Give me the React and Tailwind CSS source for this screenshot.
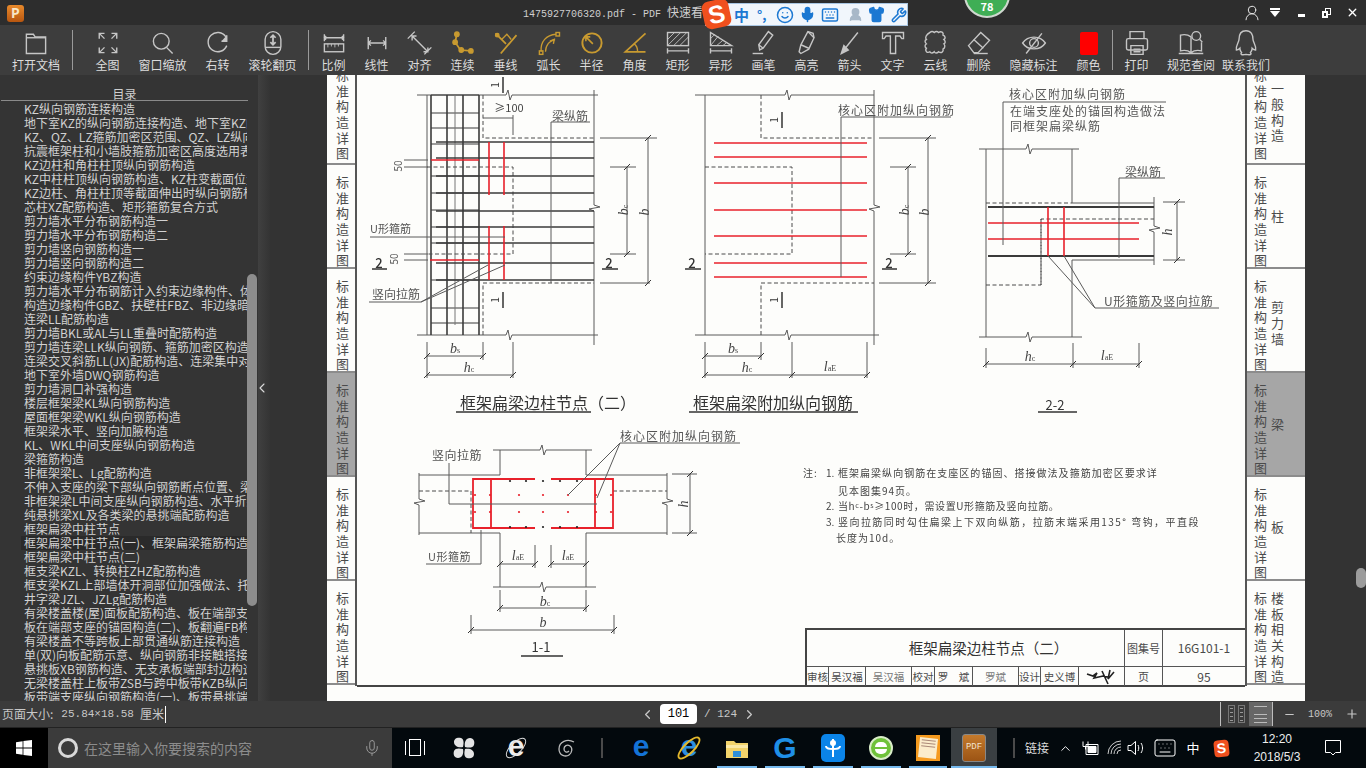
import React from "react";
import {
  ChevronLeft,
  ChevronRight,
  ChevronUp,
  Keyboard,
  Mic,
  Minus,
  Plus,
  Shirt,
  Smile,
  UserRound,
  Wrench,
  X,
} from "lucide-react";

const TOC = [
  "KZ纵向钢筋连接构造",
  "地下室KZ的纵向钢筋连接构造、地下室KZ的",
  "KZ、QZ、LZ箍筋加密区范围、QZ、LZ纵向钢",
  "抗震框架柱和小墙肢箍筋加密区高度选用表",
  "KZ边柱和角柱柱顶纵向钢筋构造",
  "KZ中柱柱顶纵向钢筋构造、KZ柱变截面位置",
  "KZ边柱、角柱柱顶等截面伸出时纵向钢筋构",
  "芯柱XZ配筋构造、矩形箍筋复合方式",
  "剪力墙水平分布钢筋构造一",
  "剪力墙水平分布钢筋构造二",
  "剪力墙竖向钢筋构造一",
  "剪力墙竖向钢筋构造二",
  "约束边缘构件YBZ构造",
  "剪力墙水平分布钢筋计入约束边缘构件、体",
  "构造边缘构件GBZ、扶壁柱FBZ、非边缘暗柱",
  "连梁LL配筋构造",
  "剪力墙BKL或AL与LL重叠时配筋构造",
  "剪力墙连梁LLK纵向钢筋、箍筋加密区构造",
  "连梁交叉斜筋LL(JX)配筋构造、连梁集中对",
  "地下室外墙DWQ钢筋构造",
  "剪力墙洞口补强构造",
  "楼层框架梁KL纵向钢筋构造",
  "屋面框架梁WKL纵向钢筋构造",
  "框架梁水平、竖向加腋构造",
  "KL、WKL中间支座纵向钢筋构造",
  "梁箍筋构造",
  "非框架梁L、Lg配筋构造",
  "不伸入支座的梁下部纵向钢筋断点位置、梁",
  "非框架梁L中间支座纵向钢筋构造、水平折梁",
  "纯悬挑梁XL及各类梁的悬挑端配筋构造",
  "框架扁梁中柱节点",
  "框架扁梁中柱节点(一)、框架扁梁箍筋构造",
  "框架扁梁中柱节点(二)",
  "框支梁KZL、转换柱ZHZ配筋构造",
  "框支梁KZL上部墙体开洞部位加强做法、托柱",
  "井字梁JZL、JZLg配筋构造",
  "有梁楼盖楼(屋)面板配筋构造、板在端部支",
  "板在端部支座的锚固构造(二)、板翻遍FB构",
  "有梁楼盖不等跨板上部贯通纵筋连接构造",
  "单(双)向板配筋示意、纵向钢筋非接触搭接",
  "悬挑板XB钢筋构造、无支承板端部封边构造",
  "无梁楼盖柱上板带ZSB与跨中板带KZB纵向钢",
  "板带端支座纵向钢筋构造(一)、板带悬挑端",
];

const G = "#c89a30";
const W = "#c6c6c6";

const Ic = ({ children, color = W }) => (
  <svg width="28" height="28" viewBox="0 0 32 32" fill="none" stroke={color} strokeWidth="1.6">
    {children}
  </svg>
);

const TOOLS = [
  { label: "打开文档", w: "w-[48px]", icon: <Ic><path d="M5 10V6h8l2 3h12v19H5z" /><path d="M5 10h22" /></Ic> },
  { sep: "ml-[12px] mr-[7px]" },
  { label: "全图", w: "w-[55px]", icon: <Ic><path d="M6 11V5h6M6 5l6 6M26 11V5h-6M26 5l-6 6M6 21v6h6M6 27l6-6M26 21v6h-6M26 27l-6-6" /></Ic> },
  { label: "窗口缩放", w: "w-[55px]", icon: <Ic><circle cx="14" cy="14" r="9" /><path d="M20 21l7 7" /></Ic> },
  { label: "右转", w: "w-[55px]", icon: <Ic><path d="M25 9a11 11 0 1 0 1 10" /><path d="M26 7v7h-6" fill={W} /></Ic> },
  { label: "滚轮翻页", w: "w-[55px]", icon: <Ic><rect x="7" y="3" width="18" height="26" rx="9" /><path d="M7 21h18" /><path d="M16 8v9M13 10l3-3 3 3M13 15l3 3 3-3" strokeWidth="2" /></Ic> },
  { sep: "ml-[8px] mr-[3px]" },
  { label: "比例", w: "w-[43px]", icon: <Ic><path d="M5 6v8M27 6v8M5 10h22M7 8l-2 2 2 2M25 8l2 2-2 2" /><rect x="5" y="17" width="22" height="9" /><path d="M9 17v4M13 17v3M17 17v4M21 17v3" strokeWidth="1" /></Ic> },
  { label: "线性", w: "w-[43px]", icon: <Ic><path d="M6 9v14M26 9v14M6 16h20M9 13l-3 3 3 3M23 13l3 3-3 3" /></Ic> },
  { label: "对齐", w: "w-[43px]", icon: <Ic><path d="M2 11L10 3M21 29l8-8M7 8l18 18M7 13V8h5M25 21v5h-5" /></Ic> },
  { label: "连续", w: "w-[43px]", icon: <Ic color={G}><path d="M9 6L7 15l6 9 12 1" strokeWidth="2" /><circle cx="9" cy="6" r="2.5" fill={G} /><circle cx="7" cy="15" r="2.5" fill={G} /><circle cx="14" cy="24" r="2.5" fill={G} /><circle cx="25" cy="25" r="2.5" fill={G} /></Ic> },
  { label: "垂线", w: "w-[43px]", icon: <Ic color={G}><path d="M4 5l12 12M28 7L10 28" strokeWidth="2" /><path d="M11 12l6-6 5 6" strokeWidth="1.5" /><circle cx="6" cy="7" r="2" fill={G} /></Ic> },
  { label: "弧长", w: "w-[43px]", icon: <Ic color={G}><path d="M7 26c-1-12 6-19 17-20M12 26c0-8 5-13 11-14" strokeWidth="1.5" /><rect x="24" y="4" width="4" height="4" /><rect x="5" y="25" width="4" height="4" /><path d="M17 14l5-2-1 5" /></Ic> },
  { label: "半径", w: "w-[43px]", icon: <Ic color={G}><circle cx="16" cy="16" r="11" strokeWidth="2.2" /><path d="M17 17L9 9M9 14V9h5" strokeWidth="1.8" /></Ic> },
  { label: "角度", w: "w-[43px]", icon: <Ic color={G}><path d="M28 5L5 26h23" strokeWidth="2" /><path d="M15 17c3 2 4 5 4 9" strokeWidth="1.5" /></Ic> },
  { label: "矩形", w: "w-[43px]", icon: <Ic><rect x="4" y="4" width="24" height="15" /><path d="M4 12l8-8M4 19L19 4M11 19L26 4M18 19l10-10" strokeWidth="1" /><path d="M4 22v6M28 22v6M4 25h24" /></Ic> },
  { label: "异形", w: "w-[43px]", icon: <Ic><path d="M4 4v15h24z" /><path d="M4 11l5-5M4 19L13 8M11 19l7-6M18 19l4-3" strokeWidth="1" /><path d="M4 22v6M28 22v6M4 25h24" /></Ic> },
  { label: "画笔", w: "w-[43px]", icon: <Ic><path d="M11 24l-1-6L21 3l5 4-11 15zM10 18l5 4" /><path d="M3 28h12" /></Ic> },
  { label: "高亮", w: "w-[43px]", icon: <Ic><path d="M9 28l-2-2 2-8 8-15 6 2 1 5-6 13z" /><path d="M9 18l9 4M17 3l7 7" /></Ic> },
  { label: "箭头", w: "w-[43px]", icon: <Ic><path d="M25 4L9 24" /><path d="M6 28l8-4-5-5z" fill={W} /></Ic> },
  { label: "文字", w: "w-[43px]", icon: <Ic><path d="M4 4h24v7h-2l-2-3h-5v20h-6V8H8l-2 3H4z" /></Ic> },
  { label: "云线", w: "w-[43px]", icon: <Ic><path d="M9 4c2-2 4-1 5 0 2-2 4-1 5 0 3-2 6 0 5 3 3 1 3 4 1 5 2 2 2 4 0 5 2 2 1 5-1 6 1 3-2 5-5 3-2 2-4 2-5 0-2 2-4 2-5 0-3 2-6-1-4-4-2-1-2-4 0-5-2-2-2-4 0-5-2-2 0-6 4-8z" /></Ic> },
  { label: "删除", w: "w-[43px]", icon: <Ic><path d="M4 19L18 4l10 9-13 14H10z" /><path d="M10 12l11 10" /><path d="M10 28h16" /></Ic> },
  { label: "隐藏标注", w: "w-[67px]", icon: <Ic><path d="M3 16c6-9 20-9 26 0-6 9-20 9-26 0z" /><circle cx="16" cy="16" r="5" /><path d="M25 5L7 28" /></Ic> },
  { label: "颜色", w: "w-[43px]", icon: <div className="w-[18px] h-[23px] rounded-[2px] bg-[#ff0000]" /> },
  { sep: "ml-[2px]" },
  { label: "打印", w: "w-[47px]", icon: <Ic><path d="M8 11V3h16v8" /><rect x="4" y="11" width="24" height="13" rx="2" /><path d="M9 19h14v10H9zM12 23h8M12 26h8" /></Ic> },
  { label: "规范查阅", w: "w-[62px]", icon: <Ic><path d="M16 9C12 6 8 6 4 7v18c4-1 8-1 12 2 4-3 8-3 12-2V15M16 9v18M2 28h28" /><circle cx="22" cy="8" r="5" /><path d="M26 12l3 3" /></Ic> },
  { label: "联系我们", w: "w-[48px]", icon: <Ic><path d="M16 2c-6 0-8 5-8 10 0 3-4 7-3 12 2 0 3-1 4-2 0 2 1 4 2 5-2 2 0 3 5 2 5 1 7 0 5-2 1-1 2-3 2-5 1 1 2 2 4 2 1-5-3-9-3-12 0-5-2-10-8-10z" /></Ic> },
];

const Sep = ({ cls }) => <div className={`w-px h-[40px] bg-[#9a9a9a] ${cls}`} />;

const Toolbar = () => (
  <div className="h-[50px] bg-[#3d3d3d] flex items-center pl-3">
    {TOOLS.map((t, i) =>
      t.sep ? (
        <Sep key={i} cls={t.sep} />
      ) : (
        <div key={i} className={`${t.w} flex flex-col items-center text-[12px] leading-[14px] text-[#dcdcdc] whitespace-nowrap`}>
          <div className="h-[29px] flex items-center justify-center">{t.icon}</div>
          <div>{t.label}</div>
        </div>
      )
    )}
  </div>
);

const TitleBar = () => (
  <div className="h-[25px] bg-[#2d2d2d] relative flex items-center">
    <div className="absolute left-[7px] top-[5px] w-[17px] h-[17px] rounded-[3px] bg-gradient-to-b from-[#e88a2c] to-[#b8560f] flex items-center justify-center text-[14px] leading-none text-[#f7e6c8] font-['Liberation_Mono',monospace] font-bold">
      P
    </div>
    <div className="ml-[523px] text-[#cfcfcf] text-[12px] whitespace-nowrap">
      <span className="font-['Liberation_Mono',monospace] text-[10px]">1475927706320.pdf - PDF </span>
      快速看图
    </div>

    <div className="absolute left-[705px] top-[3px] w-[203px] h-[23px] bg-[#f1f6fc] border border-[#a9c6e2] flex items-center text-[#1c78d2]">
      <div className="absolute -left-[3px] -top-[4px] w-[27px] h-[28px] rounded-[7px] -rotate-12 bg-[#f0501e] flex items-center justify-center text-white font-['Liberation_Sans',sans-serif] font-bold text-[25px] leading-none">
        S
      </div>
      <span className="ml-[28px] text-[15px] font-bold leading-none">中</span>
      <span className="ml-[8px] w-[14px] text-[13px] font-bold leading-none">°,</span>
      <Smile size={18} strokeWidth={2} className="ml-[5px]" />
      <Mic size={17} strokeWidth={2.2} className="ml-[5px]" fill="#1c78d2" />
      <Keyboard size={18} strokeWidth={2} className="ml-[5px]" />
      <UserRound size={15} strokeWidth={2.5} className="ml-[9px] text-[#a8b8c8]" fill="#a8b8c8" />
      <Shirt size={17} strokeWidth={2} className="ml-[5px]" fill="#1c78d2" />
      <Wrench size={16} strokeWidth={2.4} className="ml-[6px]" />
    </div>

    <div className="absolute left-[964px] -top-[28px] w-[46px] h-[46px] rounded-full bg-[#3fae55] border-2 border-[#cfd8cf] flex items-end justify-center pb-[3px] text-white text-[11px] font-bold leading-[13px]">
      78
    </div>

    <div className="absolute right-0 top-0 h-[25px] flex items-center text-[#e8e8e8]">
      <UserRound size={18} strokeWidth={1.3} />
      <div className="ml-[9px] flex flex-col items-center">
        <div className="w-[10px] h-[2px] bg-white mb-[1px]" />
        <div className="w-0 h-0 border-x-[5px] border-x-transparent border-t-[6px] border-t-white" />
      </div>
      <div className="ml-[18px] w-[7px] h-[3px] bg-white mt-[6px]" />
      <div className="ml-[17px] relative w-[9px] h-[10px]">
        <div className="absolute right-0 top-0 w-[6px] h-[7px] border border-white" />
        <div className="absolute left-0 bottom-0 w-[6px] h-[7px] border-2 border-white bg-[#2d2d2d]" />
      </div>
      <X size={13} strokeWidth={2.5} className="ml-[15px] mr-[7px] text-white" />
    </div>
  </div>
);

const Sidebar = () => (
  <div className="w-[258px] bg-[#343434] relative overflow-hidden shrink-0">
    <div className="h-[26px] w-[247px] ml-[1px] border-b border-[#8a8a8a] text-center text-[#cfcfcf] text-[12px] leading-[37px]">目录</div>
    <div className="w-[247px] pt-[1px] overflow-hidden">
      {TOC.map((t, i) => (
        <div key={i} className={`h-[14px] text-[12px] leading-[14px] whitespace-nowrap overflow-hidden text-[#d2d2d2] ${i === 31 ? "ml-[21px] pl-[3px] bg-[#2a2a2a]" : "pl-[24px]"}`}>
          {t}
        </div>
      ))}
    </div>
    <div className="absolute left-[247px] top-[199px] w-[10px] h-[332px] rounded-[5px] bg-[#8d8d8d]" />
  </div>
);

const TABS = [
  { cls: "h-[90px]", top: true, title: "一般构造", tm: "mb-[18px]" },
  { cls: "h-[104px] pt-[10px]", title: "柱", tm: "mb-[10px]" },
  { cls: "h-[104px] pt-[10px]", title: "剪力墙", tm: "mb-[4px]" },
  { cls: "h-[104px] pt-[10px]", title: "梁", active: true, tm: "mb-[10px]" },
  { cls: "h-[104px] pt-[10px]", title: "板", tm: "mb-[12px]" },
  { cls: "h-[104px] pt-[10px]", title: "楼板相关构造", tm: "" },
];

const Chars = ({ s }) => (
  <div className="flex flex-col items-center">
    {s.split("").map((c, i) => (
      <span key={i} className="h-[15.7px] leading-[15.7px]">{c}</span>
    ))}
  </div>
);

const Tab = ({ t, side }) => (
  <div className={`${t.cls} shrink-0 border-b-2 border-[#8c8c8c] flex text-[13px] text-[#4b4b4b] overflow-hidden ${t.top ? "items-end pb-[2px]" : "items-center"} ${t.active ? "bg-[#a6a6a6]" : ""}`}>
    <div className={side === "left" ? "ml-[9px]" : "ml-[7px]"}>
      <Chars s="标准构造详图" />
    </div>
    {side === "right" && (
      <div className={`ml-[4px] ${t.tm}`}>
        <Chars s={t.title} />
      </div>
    )}
  </div>
);

const Ln = ({ p, c = "#5a5a5a", w = 1, dash }) => (
  <path d={p} fill="none" stroke={c} strokeWidth={w} strokeDasharray={dash} />
);
const Dash = ({ p }) => <Ln p={p} c="#4a4a4a" w={1} dash="4 2.5" />;
const Red = ({ p, w = 1.6 }) => <Ln p={p} c="#e8212b" w={w} />;
const Bar = ({ p, w = 1.6 }) => <Ln p={p} c="#3a3a3a" w={w} />;

const Dim = ({ x1, y1, x2, y2 }) => (
  <g>
    <Ln p={`M${x1} ${y1}L${x2} ${y2}`} />
    <Ln p={`M${x1 - 3} ${y1 + 3}L${x1 + 3} ${y1 - 3}M${x2 - 3} ${y2 + 3}L${x2 + 3} ${y2 - 3}`} c="#333" />
  </g>
);

const T = ({ x, y, s = 12, sp = 0, a = "start", r, c = "#555", w, children }) => (
  <text
    x={x}
    y={y}
    fontSize={s}
    letterSpacing={sp}
    textAnchor={a}
    dominantBaseline="central"
    fill={c}
    fontWeight={w}
    transform={r ? `rotate(${r} ${x} ${y})` : undefined}
  >
    {children}
  </text>
);

const Sub = ({ x, y, a, b, r }) => (
  <text x={x} y={y} textAnchor="middle" dominantBaseline="central" fill="#444" fontFamily="'Liberation Serif', serif" transform={r ? `rotate(${r} ${x} ${y})` : undefined}>
    <tspan fontSize="14" fontStyle="italic">{a}</tspan>
    <tspan fontSize="8" dy="2">{b}</tspan>
  </text>
);

const breakH = (x1, x2, y, b) => `M${x1} ${y}H${b - 3}L${b - 1} ${y - 5}L${b + 1} ${y + 5}L${b + 3} ${y}H${x2}`;
const breakV = (x, y1, y2, b) => `M${x} ${y1}V${b - 3}L${x + 6} ${b - 1}L${x - 5} ${b + 1}L${x} ${b + 3}V${y2}`;

const Heading = ({ x, y, s = 16, children, x1, x2 }) => (
  <g>
    <T x={x} y={y} s={s} c="#333">{children}</T>
    <Ln p={`M${x1} 412H${x2}`} c="#333" w={1.5} />
  </g>
);

const Two = ({ x, x1, x2 }) => (
  <g>
    <T x={x} y={262} s={13} a="middle" c="#333" w="500">2</T>
    <Ln p={`M${x1} 269H${x2}`} c="#333" w={1.5} />
  </g>
);

const Cut = ({ x, y }) => (
  <g>
    <T x={x - 9} y={y} s={10} a="middle" r={-90} c="#333">1</T>
    <Ln p={`M${x} ${y - 8}V${y + 8}`} c="#333" w={1.5} />
  </g>
);

const LeftDetail = () => (
  <g>
    <Ln p={breakH(417, 598, 95, 509)} />
    <Ln p={breakH(417, 598, 335, 509)} />
    <Ln p="M427 95V335M594 90V205" />
    <Ln p={breakV(594, 205, 345, 208)} />
    {[95, 113, 128, 144, 176, 193, 210, 227, 243, 280, 308, 323].map((y) => (
      <Bar key={y} p={`M431 ${y}H479`} w={1.2} />
    ))}
    {[431, 447, 463, 479].map((x) => <Bar key={x} p={`M${x} 95V335`} w={1.6} />)}
    <Ln p="M455 95V325" c="#777" />
    <Dash p="M483 95V138H594M483 335V283H594M427 167H513V254H427" />
    {[142, 158, 176, 193, 211, 227, 243, 263, 280].map((y) => (
      <Bar key={y} p={`M436 ${y}H594`} />
    ))}
    <Red p="M431 160H479M430 260H479M489 142V195M504 142V195M489 226V280M504 226V280" />
    <Ln p="M483 118H513M513 115V135M551 122V283" />
    <T x={509} y={107} s={11} a="middle" c="#444">≥100</T>
    <T x={552} y={115} s={12}>梁纵筋</T>
    <Ln p="M551 122H590" />
    <T x={370} y={228} s={11}>U形箍筋</T>
    <Ln p="M370 237H505" />
    <T x={372} y={293} s={12}>竖向拉筋</T>
    <Ln p="M369 302H421L488 265M421 302L505 265" />
    <T x={397} y={166} s={10} a="middle" r={-90}>50</T>
    <T x={393} y={259} s={10} a="middle" r={-90}>50</T>
    <Ln p="M404 160H428M404 167H428M404 254H428M404 260H428" />
    <Two x={379} x1={372} x2={387} />
    <Two x={609} x1={602} x2={618} />
    <Cut x={503} y={85} />
    <Cut x={503} y={300} />
    <Ln p="M427 342V378M483 342V360M513 342V378" />
    <Dim x1={427} y1={356} x2={483} y2={356} />
    <Dim x1={427} y1={375} x2={513} y2={375} />
    <Sub x={455} y={348} a="b" b="s" />
    <Sub x={469} y={367} a="h" b="c" />
    <Ln p="M600 138H657M600 283H650M610 167H636M610 254H636" />
    <Dim x1={648} y1={138} x2={648} y2={283} />
    <Dim x1={627} y1={167} x2={627} y2={254} />
    <Sub x={623} y={210} a="b" b="c" r={-90} />
    <Sub x={644} y={212} a="b" b="" r={-90} />
    <Heading x={460} y={402} x1={456} x2={591}>框架扁梁边柱节点（二）</Heading>
  </g>
);

const MiddleDetail = () => (
  <g>
    <Ln p={breakH(695, 874, 95, 788)} />
    <Ln p={breakH(695, 879, 335, 788)} />
    <Ln p="M705 95V335M874 90V205" />
    <Ln p={breakV(874, 205, 345, 208)} />
    <Dash p="M761 95V138H874M761 335V283H874M705 167H792V254H705" />
    {[143, 157, 183, 210, 236, 263, 277].map((y) => (
      <Red key={y} p={`M714 ${y}H867`} />
    ))}
    <Ln p="M841 117V277" />
    <Ln p="M841 117H951" />
    <T x={838} y={109} s={12} sp={1}>核心区附加纵向钢筋</T>
    <Two x={692} x1={685} x2={701} />
    <Two x={889} x1={882} x2={897} />
    <Cut x={782} y={120} />
    <Cut x={782} y={300} />
    <Ln p="M705 342V378M761 342V360M792 342V378M867 342V378" />
    <Dim x1={705} y1={356} x2={761} y2={356} />
    <Dim x1={705} y1={375} x2={792} y2={375} />
    <Dim x1={792} y1={375} x2={867} y2={375} />
    <Sub x={733} y={348} a="b" b="s" />
    <Sub x={747} y={367} a="h" b="c" />
    <Sub x={830} y={366} a="l" b="aE" />
    <Ln p="M879 138H936M879 283H936M890 167H916M890 254H916" />
    <Dim x1={928} y1={138} x2={928} y2={283} />
    <Dim x1={908} y1={167} x2={908} y2={254} />
    <Sub x={904} y={210} a="b" b="c" r={-90} />
    <Sub x={924} y={212} a="b" b="" r={-90} />
    <Heading x={693} y={402} x1={689} x2={858}>框架扁梁附加纵向钢筋</Heading>
  </g>
);

const RightDetail = () => (
  <g>
    <Ln p={breakH(979, 1079, 149, 1029)} />
    <Ln p={breakH(979, 1082, 337, 1029)} />
    <Ln p="M986 149V337M1072 149V203H1154M1072 337V260H1154" />
    <Ln p={breakV(1154, 197, 265, 229)} />
    <Dash p="M986 203H1072M1041 285V219H1154M986 285H1041V219" />
    <Bar p="M988 207H1154M988 256H1154" w={1.8} />
    <Red p="M988 223H1139M988 239H1139" />
    <Red p="M1048 207V256M1064 207V256" />
    <Ln p="M1003 102V245M1003 102H1166" />
    <T x={1009} y={93} s={12} sp={1}>核心区附加纵向钢筋</T>
    <T x={1010} y={110} s={12} sp={1}>在端支座处的锚固构造做法</T>
    <T x={1010} y={125} s={12} sp={1}>同框架扁梁纵筋</T>
    <T x={1125} y={171} s={12}>梁纵筋</T>
    <Ln p="M1119 178H1165M1119 178V258" />
    <Ln p="M1163 202H1185M1163 260H1185" />
    <Dim x1={1177} y1={202} x2={1177} y2={260} />
    <Sub x={1167} y={232} a="h" b="" r={-90} />
    <Ln p="M1048 256L1095 308M1064 256L1095 308H1219" />
    <T x={1104} y={300} s={12} sp={0.5}>U形箍筋及竖向拉筋</T>
    <Ln p="M986 348V368M1073 343V368M1139 343V368" />
    <Dim x1={986} y1={364} x2={1073} y2={364} />
    <Dim x1={1073} y1={364} x2={1139} y2={364} />
    <Sub x={1030} y={356} a="h" b="c" />
    <Sub x={1107} y={355} a="l" b="aE" />
    <T x={1055} y={404} s={13} a="middle" c="#333">2-2</T>
    <Ln p="M1038 412H1077" c="#333" w={1.5} />
  </g>
);

const Dots = ({ xs, ys, c }) => (
  <g>
    {xs.map((x) => ys.map((y) => <circle key={`${x}-${y}`} cx={x} cy={y} r={1.1} fill={c} />))}
  </g>
);

const SectionDetail = () => (
  <g>
    <Ln p={breakH(493, 592, 450, 543)} />
    <Ln p={breakH(493, 596, 587, 543)} />
    <Ln p="M500 450V475H419M586 450V475H667M500 587V533H419M586 587V533H667" />
    <Ln p={breakV(419, 473, 535, 502)} />
    <Ln p={breakV(667, 473, 535, 502)} />
    <Dash p="M419 491H471V533M613 491H667" />
    <Red p="M535 479H473V528H535M551 479H613V528H551M491 479V528M595 479V528" w={1.8} />
    <Dots xs={[519, 568, 475, 490, 596, 611, 543]} ys={[495, 512]} c="#e8212b" />
    <Dots xs={[510, 526, 543, 560, 577]} ys={[481, 527]} c="#222" />
    <T x={432} y={454} s={12} sp={0.5}>竖向拉筋</T>
    <Ln p="M449 463V504H597" />
    <T x={620} y={435} s={12} sp={1}>核心区附加纵向钢筋</T>
    <Ln p="M620 443H740M620 443L568 495M620 443L597 498" />
    <T x={428} y={556} s={11} sp={0.5}>U形箍筋</T>
    <Ln p="M426 564H481V530" />
    <Ln p="M535 545V568M551 545V568M500 590V612M586 590V612M471 615V634M614 615V634" />
    <Dim x1={500} y1={564} x2={535} y2={564} />
    <Dim x1={551} y1={564} x2={586} y2={564} />
    <Dim x1={500} y1={608} x2={586} y2={608} />
    <Dim x1={471} y1={630} x2={614} y2={630} />
    <Sub x={518} y={555} a="l" b="aE" />
    <Sub x={568} y={555} a="l" b="aE" />
    <Sub x={545} y={601} a="b" b="c" />
    <Sub x={543} y={622} a="b" b="" />
    <Ln p="M672 474H697M672 533H697" />
    <Dim x1={690} y1={474} x2={690} y2={533} />
    <Sub x={683} y={504} a="h" b="" r={-90} />
    <T x={541} y={646} s={13} a="middle" c="#333">1-1</T>
    <Ln p="M521 656H563" c="#333" w={1.5} />
  </g>
);

const Notes = () => (
  <g>
    <T x={803} y={472} s={10} sp={1} c="#444">注:</T>
    <T x={826} y={472} s={10} c="#444">1.</T>
    <T x={838} y={472} s={10} sp={1.03} c="#444">框架扁梁纵向钢筋在支座区的锚固、搭接做法及箍筋加密区要求详</T>
    <T x={838} y={490} s={10} sp={1} c="#444">见本图集94页。</T>
    <T x={826} y={505} s={10} c="#444">2.</T>
    <T x={838} y={505} s={10} sp={0.6} c="#444">当h<tspan fontSize="7">c</tspan>-b<tspan fontSize="7">s</tspan>≥100时，需设置U形箍筋及竖向拉筋。</T>
    <T x={826} y={521} s={10} c="#444">3.</T>
    <T x={838} y={521} s={10} sp={1.45} c="#444">竖向拉筋同时勾住扁梁上下双向纵筋，拉筋末端采用135° 弯钩，平直段</T>
    <T x={836} y={537} s={10} sp={1} c="#444">长度为10d。</T>
  </g>
);

const Cell = ({ w, children, last, cls = "" }) => (
  <div className={`${w} shrink-0 h-full flex items-center justify-center whitespace-nowrap ${last ? "" : "border-r border-[#555]"} ${cls}`}>
    {children}
  </div>
);

const TitleBlock = () => (
  <div className="absolute left-[448px] top-[553px] w-[440px] h-[58px] border-t-2 border-l-2 border-[#444] flex flex-col text-[#4a4a4a]">
    <div className="h-[37px] flex border-b border-[#555]">
      <div className="w-[318px] shrink-0 h-full flex items-center justify-center border-r border-[#555] text-[14.5px] text-[#333] pl-[46px]">框架扁梁边柱节点（二）</div>
      <Cell w="w-[38px]" cls="text-[11px]">图集号</Cell>
      <Cell w="w-[82px]" last cls="text-[12px]">16G101-1</Cell>
    </div>
    <div className="flex-1 flex text-[10.5px]">
      <Cell w="w-[22px]">审核</Cell>
      <Cell w="w-[37px]">吴汉福</Cell>
      <Cell w="w-[46px]" cls="text-[#777]">吴汉福</Cell>
      <Cell w="w-[23px]">校对</Cell>
      <Cell w="w-[38px]">罗　斌</Cell>
      <Cell w="w-[46px]" cls="text-[#777]">罗斌</Cell>
      <Cell w="w-[22px]">设计</Cell>
      <Cell w="w-[38px]">史义博</Cell>
      <Cell w="w-[46px]">
        <svg width="32" height="16" viewBox="0 0 32 16" fill="none" stroke="#222" strokeWidth="1.6">
          <path d="M1 5l6 2 4-3-3 5 9-2 5 1M16 2l6 13M24 1l-2 9 6-7" />
        </svg>
      </Cell>
      <Cell w="w-[38px]" cls="text-[11px]">页</Cell>
      <Cell w="w-[82px]" last cls="text-[12px]">95</Cell>
    </div>
  </div>
);

const Page = () => (
  <div className="w-[978px] shrink-0 bg-[#fdfdfb] flex overflow-hidden">
    <div className="w-[30px] shrink-0 border-r-2 border-[#555] h-[611px] flex flex-col">
      {TABS.map((t, i) => <Tab key={i} t={t} side="left" />)}
    </div>
    <div className="w-[888px] shrink-0 h-[626px] relative">
      <svg width="888" height="626" viewBox="357 75 888 626" className="blur-[0.3px]">
        <LeftDetail />
        <MiddleDetail />
        <RightDetail />
        <SectionDetail />
        <Notes />
        <Ln p="M357 686H1245" c="#444" w={2} />
      </svg>
      <TitleBlock />
    </div>
    <div className="w-[60px] shrink-0 border-l-2 border-[#555] h-[611px] flex flex-col">
      {TABS.map((t, i) => <Tab key={i} t={t} side="right" />)}
    </div>
  </div>
);

const StatusBar = () => (
  <div className="h-[27px] bg-[#3b3b3b] border-b border-[#222] flex items-center text-[#c8c8c8] relative">
    <div className="ml-[2px] w-[638px] flex items-center text-[12px] whitespace-nowrap">
      页面大小:<span className="font-['Liberation_Mono',monospace] text-[11px] ml-[8px] mr-[6px]">25.84×18.58</span>厘米
      <span className="ml-[1px] w-px h-[17px] bg-white" />
    </div>
    <ChevronLeft size={15} />
    <div className="ml-[5px] w-[37px] h-[20px] rounded-[4px] bg-white text-black text-[12px] leading-[20px] text-center font-['Liberation_Mono',monospace]">101</div>
    <span className="ml-[7px] text-[11px] font-['Liberation_Mono',monospace]">/ 124</span>
    <ChevronRight size={15} className="ml-[5px]" />
    <div className="absolute right-0 top-0 h-full flex items-center">
      <div className="w-px h-[24px] bg-[#bdbdbd]" />
      <div className="ml-[7px] flex gap-[3px]">
        {[0, 1].map((i) => (
          <div key={i} className="w-[7px] h-[18px] border border-[#777] flex flex-col justify-around px-[1px]">
            <div className="h-px bg-[#999]" />
            <div className="h-px bg-[#999]" />
            <div className="h-px bg-[#999]" />
            <div className="h-px bg-[#999]" />
          </div>
        ))}
      </div>
      <div className="ml-[4px] w-[23px] h-[24px] bg-[#666] flex flex-col items-center justify-center gap-[3px]">
        <div className="w-[13px] h-[9px] border-y border-[#bbb]" />
        <div className="w-[13px] h-[5px] border-y border-[#bbb]" />
      </div>
      <div className="w-px h-[24px] bg-[#bdbdbd]" />
      <Minus size={13} className="ml-[10px]" />
      <span className="ml-[12px] w-[26px] text-[10px] font-['Liberation_Mono',monospace]">100%</span>
      <Plus size={14} className="ml-[11px] mr-[7px]" />
    </div>
  </div>
);

const TaskIcon = ({ w, children, on, active }) => (
  <div className={`${w} h-full shrink-0 relative flex items-center justify-center ${active ? "bg-[#3a3f42]" : ""}`}>
    {children}
    {on && <div className={`absolute bottom-0 h-[2px] bg-[#76b9ed] ${active ? "inset-x-0" : "inset-x-[4px]"}`} />}
  </div>
);

const BigE = ({ c, children }) => (
  <span className="relative flex items-center justify-center w-[26px] h-[26px]">
    {children}
    <span className={`font-['Liberation_Sans',sans-serif] font-bold text-[30px] leading-none -mt-[5px] ${c}`}>e</span>
  </span>
);

const Taskbar = () => (
  <div className="h-[40px] bg-[#03090d] flex items-stretch text-white">
    <div className="w-[48px] bg-black shrink-0 flex items-center justify-center">
      <svg width="16" height="16" viewBox="0 0 16 16" fill="#fff">
        <path d="M0 2.2l6.6-1v6.4H0zM7.4 1.1L16 0v7.6H7.4zM0 8.4h6.6v6.4l-6.6-1zM7.4 8.4H16V16l-8.6-1.1z" />
      </svg>
    </div>
    <div className="w-[344px] shrink-0 bg-[#3b3b3b] flex items-center">
      <div className="ml-[10px] w-[20px] h-[20px] rounded-full border-[3px] border-[#d8d8d8]" />
      <span className="ml-[6px] text-[14px] text-[#8c8c8c]">在这里输入你要搜索的内容</span>
      <Mic size={18} strokeWidth={1.3} className="ml-[111px] text-[#999]" />
    </div>
    <TaskIcon w="w-[46px]">
      <div className="w-[20px] h-[14px] border-x border-white flex justify-center">
        <div className="w-[12px] h-[17px] -mt-[2px] border border-white bg-[#03090d]" />
      </div>
    </TaskIcon>
    <TaskIcon w="w-[52px]">
      <svg width="22" height="22" viewBox="0 0 22 22" fill="#e4e4e4">
        <path d="M10 10C5 11 1 9 1 5s4-5 7-4 3 5 2 9zM12 10C11 5 13 1 17 1s5 4 4 7-5 3-9 2zM12 12c5-1 9 1 9 5s-4 5-7 4-3-5-2-9zM10 12c1 5-1 9-5 9s-5-4-4-7 5-3 9-2z" />
      </svg>
    </TaskIcon>
    <TaskIcon w="w-[52px]">
      <BigE c="text-[#eee]">
        <span className="absolute w-[26px] h-[12px] rounded-[50%] border border-[#ddd] -rotate-45" />
      </BigE>
    </TaskIcon>
    <TaskIcon w="w-[50px]">
      <svg width="20" height="20" viewBox="0 0 20 20" fill="none" stroke="#bbb" strokeWidth="1.3">
        <path d="M17 4C10 0 2 4 2 11s7 8 10 6 4-7 1-9-6 0-6 3 3 4 5 2" />
      </svg>
    </TaskIcon>
    <div className="ml-[9px] mr-[14px] my-[10px] w-[2px] bg-[#4a4a4a]" />
    <TaskIcon w="w-[48px]"><BigE c="text-[#1473d6]" /></TaskIcon>
    <TaskIcon w="w-[48px]">
      <BigE c="text-[#2d8fe0]">
        <span className="absolute w-[30px] h-[12px] rounded-[50%] border-2 border-[#e5b92c] -rotate-45" />
      </BigE>
    </TaskIcon>
    <TaskIcon w="w-[48px]" on>
      <svg width="24" height="22" viewBox="0 0 24 22">
        <path d="M1 4h8l2 2h12v15H1z" fill="#f2d36b" />
        <path d="M1 8h22v3H1z" fill="#fbe9a6" />
        <path d="M8 14h8v6H8z" fill="#2f8fd8" />
      </svg>
    </TaskIcon>
    <TaskIcon w="w-[48px]" on>
      <span className="font-['Liberation_Sans',sans-serif] font-bold text-[30px] leading-none text-[#1f8fe6]">G</span>
    </TaskIcon>
    <TaskIcon w="w-[48px]" on>
      <div className="w-[24px] h-[28px] rounded-[5px] bg-[#0b84e8] flex items-center justify-center">
        <svg width="18" height="20" viewBox="0 0 18 20" fill="none" stroke="#fff" strokeWidth="2">
          <path d="M9 1v18M2 8c0 3 3 3 7 3s7 0 7-3" />
          <circle cx="9" cy="5" r="2" />
        </svg>
      </div>
    </TaskIcon>
    <TaskIcon w="w-[48px]" on>
      <div className="w-[24px] h-[24px] rounded-full bg-[#6fc23a] border-2 border-[#d9ecc8] flex flex-col items-center justify-center gap-[2px]">
        <div className="w-[12px] h-[5px] rounded-t-full bg-white" />
        <div className="w-[12px] h-[5px] rounded-b-full bg-white" />
      </div>
    </TaskIcon>
    <TaskIcon w="w-[46px]" on>
      <div className="w-[24px] h-[26px] bg-[#f59a1e] p-[3px]">
        <div className="w-full h-full bg-[#fbeccb] rotate-6 flex flex-col gap-[2px] p-[2px]">
          <div className="h-px bg-[#a87]" />
          <div className="h-px bg-[#a87]" />
          <div className="h-px bg-[#a87]" />
        </div>
      </div>
    </TaskIcon>
    <TaskIcon w="w-[46px]" on active>
      <div className="w-[24px] h-[28px] rounded-[3px] bg-gradient-to-b from-[#c47a2c] to-[#9c5414] border border-[#888] flex items-center justify-center text-[9px] text-[#f1e2cc] font-['Liberation_Mono',monospace]">
        PDF
      </div>
    </TaskIcon>
    <div className="ml-[16px] my-[10px] w-[2px] bg-[#4a4a4a]" />
    <div className="w-[44px] shrink-0 flex items-center justify-center text-[12px] text-[#ddd]">链接</div>
    <div className="w-[12px] shrink-0 flex items-center justify-center"><ChevronUp size={15} strokeWidth={1.5} className="shrink-0" /></div>
    <div className="w-[38px] shrink-0 flex items-center justify-center">
      <svg width="17" height="14" viewBox="0 0 17 14" fill="none" stroke="#fff">
        <path d="M4 3.5h12v10H4z" />
        <path d="M6 5.5h8v6H6z" fill="#fff" />
        <path d="M1 .5v5h5v-5M3.5 5.5v3" />
      </svg>
    </div>
    <div className="w-[12px] shrink-0 flex items-center justify-center">
      <svg width="16" height="16" viewBox="0 0 16 16" fill="none" stroke="#ccc" className="shrink-0">
        <path d="M1 14A13 13 0 0 1 14 1M4 14A10 10 0 0 1 14 4M7 14a7 7 0 0 1 7-7M10 14a4 4 0 0 1 4-4" />
      </svg>
    </div>
    <div className="w-[28px] shrink-0 flex items-center justify-center">
      <svg width="17" height="16" viewBox="0 0 17 16" fill="none" stroke="#fff">
        <path d="M1 5.5h3L8.5 1.5v13L4 10.5H1zM11 5c1 2 1 4 0 6M14 3c2 3 2 7 0 10" />
      </svg>
    </div>
    <div className="w-[32px] shrink-0 flex items-center justify-center"><Keyboard size={24} strokeWidth={1} /></div>
    <div className="w-[24px] shrink-0 flex items-center justify-center text-[13px]">中</div>
    <div className="w-[32px] shrink-0 flex items-center justify-center">
      <div className="w-[15px] h-[17px] rounded-[4px] -rotate-6 bg-[#f0501e] text-white text-[14px] leading-[17px] text-center font-bold font-['Liberation_Sans',sans-serif]">S</div>
    </div>
    <div className="w-[80px] shrink-0 flex flex-col items-center justify-center text-[12px] leading-[18px] font-['Liberation_Sans',sans-serif] text-[#eee]">
      <div>12:20</div>
      <div>2018/5/3</div>
    </div>
    <div className="w-[32px] shrink-0 flex items-center justify-center">
      <svg width="16" height="16" viewBox="0 0 16 16" fill="none" stroke="#fff">
        <path d="M.5.5h15v12h-5L8 15l-2.5-2.5h-5z" />
      </svg>
    </div>
  </div>
);

export default function App() {
  return (
    <div className="w-[1366px] h-[768px] overflow-hidden bg-[#333] flex flex-col font-['Noto_Sans_CJK_SC',sans-serif]">
      <TitleBar />
      <Toolbar />
      <div className="h-[626px] flex">
        <Sidebar />
        <div className="w-[12px] shrink-0 bg-gradient-to-r from-[#404040] to-[#343434] flex items-center justify-center text-[#ddd]">
          <ChevronLeft size={16} strokeWidth={1.6} className="-ml-[5px] shrink-0" />
        </div>
        <div className="w-[57px] shrink-0 bg-[#333]" />
        <Page />
        <div className="flex-1 bg-[#333] relative">
          <div className="absolute right-0 top-[493px] w-[10px] h-[20px] rounded-[5px] bg-[#9c9c9c]" />
        </div>
      </div>
      <StatusBar />
      <Taskbar />
    </div>
  );
}
